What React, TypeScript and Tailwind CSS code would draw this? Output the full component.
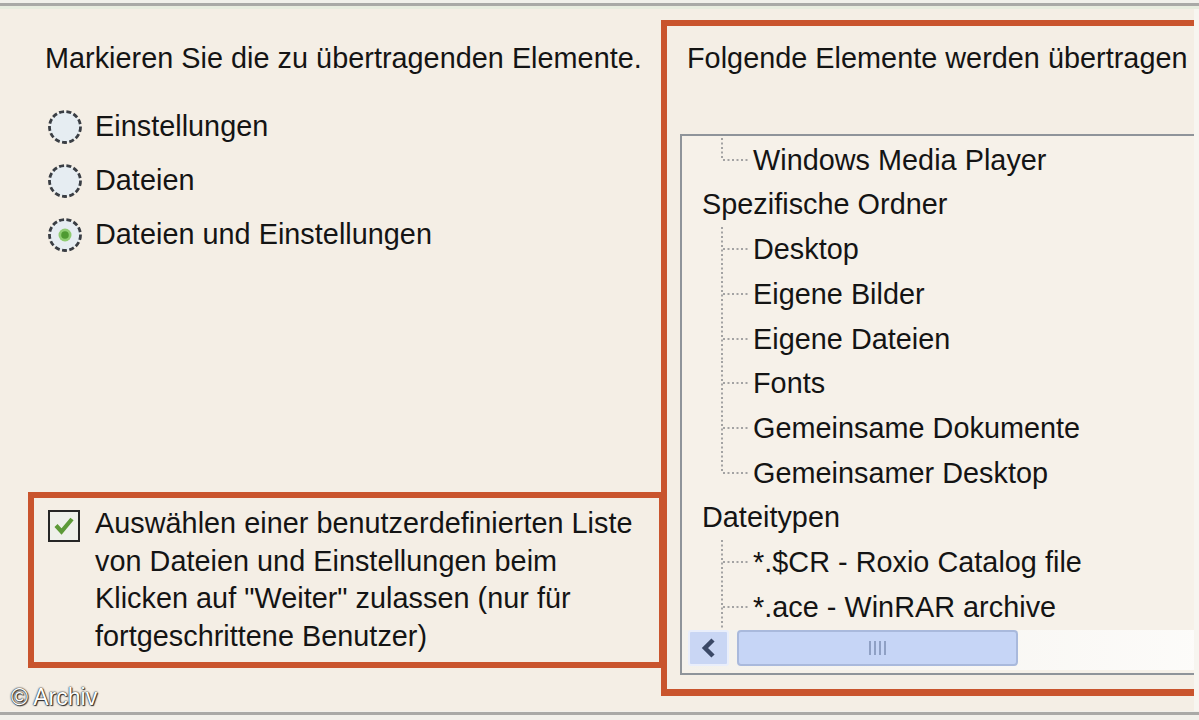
import React from "react";

type Row = { text: string; kind: "parent" | "mid" | "last" };

const rows: Row[] = [
  { text: "Windows Media Player", kind: "last" },
  { text: "Spezifische Ordner", kind: "parent" },
  { text: "Desktop", kind: "mid" },
  { text: "Eigene Bilder", kind: "mid" },
  { text: "Eigene Dateien", kind: "mid" },
  { text: "Fonts", kind: "mid" },
  { text: "Gemeinsame Dokumente", kind: "mid" },
  { text: "Gemeinsamer Desktop", kind: "last" },
  { text: "Dateitypen", kind: "parent" },
  { text: "*.$CR - Roxio Catalog file", kind: "mid" },
  { text: "*.ace - WinRAR archive", kind: "mid" },
];

function Radio({ checked }: { checked?: boolean }) {
  return (
    <svg width="36" height="36" viewBox="0 0 36 36" className="shrink-0">
      <circle cx="18" cy="18" r="15.5" fill="#e6edf2" stroke="#3a3e44" strokeWidth="2.8" strokeDasharray="5 2.4" />
      {checked && (
        <>
          <circle cx="18" cy="18" r="6.5" fill="#8fcc72" />
          <circle cx="18" cy="18" r="3.8" fill="#4f9a32" />
        </>
      )}
    </svg>
  );
}

function TreeConnector({ kind }: { kind: "mid" | "last" }) {
  return (
    <svg width="70" height="45" viewBox="0 0 70 45" className="shrink-0">
      <line
        x1="40"
        y1="0"
        x2="40"
        y2={kind === "last" ? 22 : 45}
        stroke="#a3a3a3"
        strokeWidth="2"
        strokeDasharray="2 2.5"
      />
      <line x1="41" y1="22" x2="66" y2="22" stroke="#a3a3a3" strokeWidth="2" strokeDasharray="2 2.5" />
    </svg>
  );
}

export default function App() {
  return (
    <div className="relative w-[1199px] h-[720px] overflow-hidden bg-[#f4eee5] flex flex-col font-['Liberation_Sans',Arial,sans-serif] text-[#141414] tracking-[0.03px]">
      <div className="h-[3px] bg-[#f1f0eb]" />
      <div className="h-[3px] bg-[#a9a9a7]" />
      <div className="h-[3px] bg-[#e7ecdf]" />

      <div className="h-[702px] flex">
        <div className="w-[1194px] overflow-hidden flex">
          {/* Left column */}
          <div className="w-[661px] shrink-0 flex flex-col">
            <div className="pt-[32px] pl-[45px] text-[28.8px] leading-[34px] whitespace-nowrap">
              Markieren Sie die zu übertragenden Elemente.
            </div>
            <div className="mt-[25px] pl-[47px] flex flex-col text-[28.8px]">
              {[
                { label: "Einstellungen", checked: false },
                { label: "Dateien", checked: false },
                { label: "Dateien und Einstellungen", checked: true },
              ].map((r) => (
                <div key={r.label} className="h-[54px] flex items-center gap-[12px] whitespace-nowrap">
                  <Radio checked={r.checked} />
                  <span>{r.label}</span>
                </div>
              ))}
            </div>

            <div className="mt-auto mb-[43px] ml-[28px] w-[637px] h-[176px] border-[6px] border-[#c9542d] flex pt-[7px] pl-[14px]">
              <div className="mt-[5px] w-[32px] h-[32px] shrink-0 border-[2.5px] border-[#262626] bg-[#eef0ea] flex items-center justify-center">
                <svg width="24" height="24" viewBox="0 0 24 24">
                  <path d="M4 11.5 L9.5 17.5 L20 5" fill="none" stroke="#5c9a38" strokeWidth="4.2" strokeLinejoin="miter" />
                </svg>
              </div>
              <div className="ml-[15px] text-[28.8px] leading-[37.5px]">
                <div className="whitespace-nowrap">Auswählen einer benutzerdefinierten Liste</div>
                <div className="whitespace-nowrap">von Dateien und Einstellungen beim</div>
                <div className="whitespace-nowrap">Klicken auf "Weiter" zulassen (nur für</div>
                <div className="whitespace-nowrap">fortgeschrittene Benutzer)</div>
              </div>
            </div>
          </div>

          {/* Right column */}
          <div className="flex-1 min-w-0 pt-[11px] pb-[15px]">
            <div className="h-full w-[560px] border-t-[6px] border-l-[6px] border-b-[7px] border-[#c9542d] flex flex-col pt-[15px] pl-[20px] pb-[14px]">
              <div className="text-[28.8px] leading-[34px] whitespace-nowrap">
                Folgende Elemente werden übertragen
              </div>
              <div className="mt-[59px] -ml-[7px] flex-1 border-t-2 border-l-2 border-b-2 border-[#8f949a] bg-[#f6f1e9] flex flex-col">
                <div className="h-[494px] pt-[2px] overflow-hidden text-[28.8px]">
                  {rows.map((r) => (
                    <div key={r.text} className="h-[44.7px] flex items-center whitespace-nowrap">
                      {r.kind === "parent" ? (
                        <span className="pl-[20px]">{r.text}</span>
                      ) : (
                        <>
                          <TreeConnector kind={r.kind} />
                          <span className="ml-[1px]">{r.text}</span>
                        </>
                      )}
                    </div>
                  ))}
                </div>
                <div className="h-[40px] flex items-start bg-gradient-to-r from-[#f3f1ec] to-[#fdfcfa]">
                  <div className="ml-[6px] w-[41px] h-[36px] rounded-[3px] border-2 border-[#e9eefb] bg-[#c9d6f4] flex items-center justify-center">
                    <svg width="18" height="22" viewBox="0 0 18 22">
                      <path d="M13 3 L5 11 L13 19" fill="none" stroke="#3a4866" strokeWidth="4.5" />
                    </svg>
                  </div>
                  <div className="ml-[8px] w-[281px] h-[36px] rounded-[4px] border-2 border-[#a9b9dc] bg-[#c6d5f6] flex items-center justify-center gap-[3px]">
                    <div className="w-[2px] h-[14px] bg-[#8fa0c4]" />
                    <div className="w-[2px] h-[14px] bg-[#8fa0c4]" />
                    <div className="w-[2px] h-[14px] bg-[#8fa0c4]" />
                    <div className="w-[2px] h-[14px] bg-[#8fa0c4]" />
                  </div>
                </div>
                <div className="h-[1px]" />
              </div>
            </div>
          </div>
        </div>
        <div className="flex-1 bg-[#f7f5f0]" />
      </div>

      <div className="h-[1px] bg-[#f1f0eb]" />
      <div className="h-[3px] bg-[#a9a9a7]" />
      <div className="flex-1 bg-[#f1f0eb]" />

      <div className="absolute left-[11px] top-[684px] text-[23px] leading-[26px] text-white whitespace-nowrap [text-shadow:0_0_2px_#222,0_0_1px_#000,1px_1px_1px_#333]">
        © Archiv
      </div>
    </div>
  );
}
